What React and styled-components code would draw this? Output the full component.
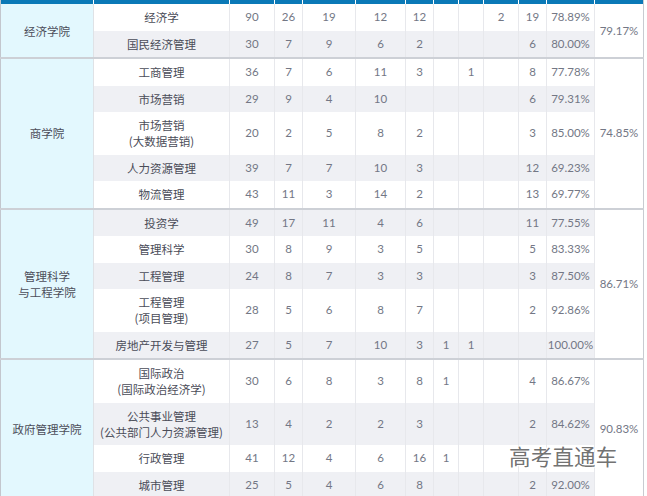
import React from 'react';
import styled, { createGlobalStyle } from 'styled-components';

const GlobalStyle = createGlobalStyle`
  html, body {
    margin: 0;
    padding: 0;
    background: #ffffff;
  }
  body {
    font-family: 'Lato', 'Noto Sans CJK SC', sans-serif;
  }
`;

const widths = [93, 136, 45, 28, 53, 50, 28, 25, 25, 35, 28, 48, 49];

const groups = [
  {
    college: ['经济学院'],
    rate: '79.17%',
    rows: [
      { name: ['经济学'], v: ['90', '26', '19', '12', '12', '', '', '2', '19', '78.89%'] },
      { name: ['国民经济管理'], v: ['30', '7', '9', '6', '2', '', '', '', '6', '80.00%'] },
    ],
  },
  {
    college: ['商学院'],
    rate: '74.85%',
    rows: [
      { name: ['工商管理'], v: ['36', '7', '6', '11', '3', '', '1', '', '8', '77.78%'] },
      { name: ['市场营销'], v: ['29', '9', '4', '10', '', '', '', '', '6', '79.31%'] },
      { name: ['市场营销', '(大数据营销)'], v: ['20', '2', '5', '8', '2', '', '', '', '3', '85.00%'] },
      { name: ['人力资源管理'], v: ['39', '7', '7', '10', '3', '', '', '', '12', '69.23%'] },
      { name: ['物流管理'], v: ['43', '11', '3', '14', '2', '', '', '', '13', '69.77%'] },
    ],
  },
  {
    college: ['管理科学', '与工程学院'],
    rate: '86.71%',
    rows: [
      { name: ['投资学'], v: ['49', '17', '11', '4', '6', '', '', '', '11', '77.55%'] },
      { name: ['管理科学'], v: ['30', '8', '9', '3', '5', '', '', '', '5', '83.33%'] },
      { name: ['工程管理'], v: ['24', '8', '7', '3', '3', '', '', '', '3', '87.50%'] },
      { name: ['工程管理', '(项目管理)'], v: ['28', '5', '6', '8', '7', '', '', '', '2', '92.86%'] },
      { name: ['房地产开发与管理'], v: ['27', '5', '7', '10', '3', '1', '1', '', '', '100.00%'] },
    ],
  },
  {
    college: ['政府管理学院'],
    rate: '90.83%',
    rows: [
      { name: ['国际政治', '(国际政治经济学)'], v: ['30', '6', '8', '3', '8', '1', '', '', '4', '86.67%'] },
      { name: ['公共事业管理', '(公共部门人力资源管理)'], v: ['13', '4', '2', '2', '3', '', '', '', '2', '84.62%'] },
      // the last two values of this row sit under the watermark
      { name: ['行政管理'], v: ['41', '12', '4', '6', '16', '1', '', '', '', ''] },
      { name: ['城市管理'], v: ['25', '5', '4', '6', '8', '', '', '', '2', '92.00%'] },
    ],
  },
];

const Page = styled.div`
  position: relative;
  width: 647px;
  height: 496px;
  overflow: hidden;
`;

const Table = styled.table`
  width: 644px;
  table-layout: fixed;
  border-collapse: collapse;
  border-left: 1px solid #c3c7ce;
  border-right: 1px solid #c8cbd1;
  border-bottom: 1px solid #c8cbd1;
`;

const HeadCell = styled.td`
  height: 4px;
  padding: 0;
  background: #0a79b7;
  border-left: 1px solid #ffffff;
  &:first-child {
    border-left: none;
  }
`;

const Row = styled.tr`
  background: ${(p) => (p.$alt ? '#eff0f4' : '#ffffff')};
  border-top: ${(p) => (p.$first ? '2px solid #cdd0d6' : 'none')};
`;

const Cell = styled.td`
  padding: 5.25px 0;
  line-height: 16px;
  font-size: 11.5px;
  text-align: center;
  vertical-align: middle;
  color: #737785;
  border-left: 1px solid #e7e8ec;
  white-space: nowrap;
  overflow: visible;
`;

const CollegeCell = styled(Cell)`
  background: #e3f8fe;
  color: #4c4e5a;
  font-family: 'Noto Sans CJK SC', sans-serif;
  border-left: none;
  border-right: 1px solid #dfe2e6;
`;

const NameCell = styled(Cell)`
  color: #4a4c58;
  font-family: 'Noto Sans CJK SC', sans-serif;
`;

const RateCell = styled(Cell)`
  background: #ffffff;
`;

const Watermark = styled.div`
  position: absolute;
  left: 509px;
  top: 442px;
  font-family: 'Noto Sans CJK SC', sans-serif;
  font-size: 21.5px;
  line-height: 28px;
  letter-spacing: 0.2px;
  color: rgba(95, 95, 95, 0.9);
  text-shadow: 0 0 2px #fff, 0 0 2px #fff, 1px 1px 1px #fff, -1px -1px 1px #fff;
  pointer-events: none;
`;

const Lines = ({ items }) =>
  items.map((t, i) => (
    <React.Fragment key={i}>
      {i > 0 && <br />}
      {t}
    </React.Fragment>
  ));

export default function App() {
  let index = 0;
  return (
    <Page>
      <GlobalStyle />
      <Table>
        <colgroup>
          {widths.map((w, i) => (
            <col key={i} style={{ width: w }} />
          ))}
        </colgroup>
        <tbody>
          <tr>
            {widths.map((w, i) => (
              <HeadCell key={i} />
            ))}
          </tr>
          {groups.map((g, gi) =>
            g.rows.map((r, ri) => {
              const alt = index % 2 === 1;
              index += 1;
              return (
                <Row key={`${gi}-${ri}`} $alt={alt} $first={ri === 0 && gi > 0}>
                  {ri === 0 && (
                    <CollegeCell rowSpan={g.rows.length}>
                      <Lines items={g.college} />
                    </CollegeCell>
                  )}
                  <NameCell>
                    <Lines items={r.name} />
                  </NameCell>
                  {r.v.map((v, vi) => (
                    <Cell key={vi}>{v}</Cell>
                  ))}
                  {ri === 0 && <RateCell rowSpan={g.rows.length}>{g.rate}</RateCell>}
                </Row>
              );
            })
          )}
        </tbody>
      </Table>
      <Watermark>高考直通车</Watermark>
    </Page>
  );
}
